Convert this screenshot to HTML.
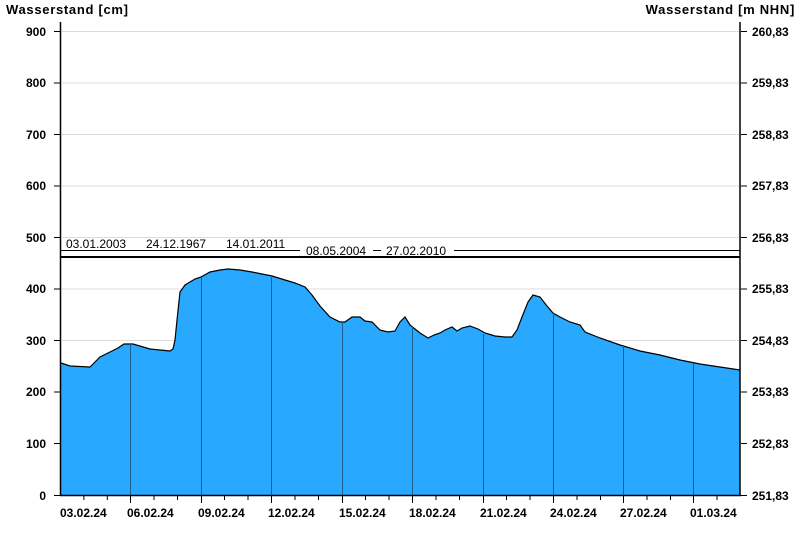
<!DOCTYPE html>
<html><head><meta charset="utf-8"><style>
html,body{margin:0;padding:0;background:#fff;}
svg{display:block;font-family:"Liberation Sans",Arial,sans-serif;}
.b{font-weight:bold;font-size:12px;fill:#000;}
.t{font-size:12px;fill:#000;}
.h{font-weight:bold;font-size:13px;fill:#000;letter-spacing:0.7px;}
</style></head><body>
<svg width="800" height="550" viewBox="0 0 800 550" xmlns="http://www.w3.org/2000/svg">
<rect width="800" height="550" fill="#fff"/>
<text x="6" y="14" class="h">Wasserstand [cm]</text>
<text x="795" y="14" class="h" text-anchor="end">Wasserstand [m NHN]</text>
<g stroke="#dcdcdc" stroke-width="1">
<line x1="61" y1="31.5" x2="740" y2="31.5"/>
<line x1="61" y1="83" x2="740" y2="83"/>
<line x1="61" y1="134.5" x2="740" y2="134.5"/>
<line x1="61" y1="186" x2="740" y2="186"/>
<line x1="61" y1="237.5" x2="740" y2="237.5"/>
<line x1="61" y1="289" x2="740" y2="289"/>
<line x1="61" y1="340.5" x2="740" y2="340.5"/>
<line x1="61" y1="392" x2="740" y2="392"/>
<line x1="61" y1="443.5" x2="740" y2="443.5"/>
</g>
<polygon fill="#29a8ff" stroke="none" points="61,495 61,363 70,366 90,367 95,362 100,357 110,352 118,348 124,344 133,344 150,349 160,350 170,351 173,349 175,340 177,320 180,292 185,285 195,279 201,277 210,272 220,270 228,269 240,270 252,272 262,274 272,276 285,280 295,283 305,287 312,295 320,306 330,317 340,322 345,322 352,317 360,317 365,321 372,322 380,330 388,332 395,331 400,322 405,317 410,325 415,329 420,333 428,338 434,335 440,333 445,330 452,327 457,331 462,328 470,326 478,329 485,333 495,336 505,337 512,337 517,330 522,317 528,302 533,295 540,297 547,306 553,313 560,317 570,322 580,325 585,332 600,338 620,345 640,351 660,355 680,360 700,364 720,367 740,370 740,495"/>
<polyline fill="none" stroke="#000" stroke-width="1.2" points="61,363 70,366 90,367 95,362 100,357 110,352 118,348 124,344 133,344 150,349 160,350 170,351 173,349 175,340 177,320 180,292 185,285 195,279 201,277 210,272 220,270 228,269 240,270 252,272 262,274 272,276 285,280 295,283 305,287 312,295 320,306 330,317 340,322 345,322 352,317 360,317 365,321 372,322 380,330 388,332 395,331 400,322 405,317 410,325 415,329 420,333 428,338 434,335 440,333 445,330 452,327 457,331 462,328 470,326 478,329 485,333 495,336 505,337 512,337 517,330 522,317 528,302 533,295 540,297 547,306 553,313 560,317 570,322 580,325 585,332 600,338 620,345 640,351 660,355 680,360 700,364 720,367 740,370"/>
<g stroke="#1b5f8f" stroke-width="1">
<line x1="130.5" y1="344" x2="130.5" y2="495"/>
<line x1="201.5" y1="277" x2="201.5" y2="495"/>
<line x1="271.5" y1="276" x2="271.5" y2="495"/>
<line x1="342.5" y1="322" x2="342.5" y2="495"/>
<line x1="412.5" y1="326" x2="412.5" y2="495"/>
<line x1="483.5" y1="334" x2="483.5" y2="495"/>
<line x1="553.5" y1="313" x2="553.5" y2="495"/>
<line x1="623.5" y1="345" x2="623.5" y2="495"/>
<line x1="693.5" y1="363" x2="693.5" y2="495"/>
</g>
<line x1="61" y1="250.5" x2="300" y2="250.5" stroke="#000" stroke-width="1"/>
<line x1="373" y1="250.5" x2="381" y2="250.5" stroke="#000" stroke-width="1"/>
<line x1="454" y1="250.5" x2="740" y2="250.5" stroke="#000" stroke-width="1"/>
<line x1="61" y1="257" x2="740" y2="257" stroke="#000" stroke-width="2"/>
<text x="66" y="248" class="t">03.01.2003</text>
<text x="146" y="248" class="t">24.12.1967</text>
<text x="226" y="248" class="t">14.01.2011</text>
<text x="306" y="255" class="t">08.05.2004</text>
<text x="386" y="255" class="t">27.02.2010</text>
<g stroke="#000" stroke-width="1.5">
<line x1="60.5" y1="22" x2="60.5" y2="496"/>
<line x1="740" y1="22" x2="740" y2="496"/>
<line x1="60" y1="495.5" x2="741" y2="495.5"/>
</g>
<g stroke="#000" stroke-width="1">
<line x1="54" y1="31.5" x2="60" y2="31.5"/><line x1="54" y1="83" x2="60" y2="83"/><line x1="54" y1="134.5" x2="60" y2="134.5"/><line x1="54" y1="186" x2="60" y2="186"/><line x1="54" y1="237.5" x2="60" y2="237.5"/><line x1="54" y1="289" x2="60" y2="289"/><line x1="54" y1="340.5" x2="60" y2="340.5"/><line x1="54" y1="392" x2="60" y2="392"/><line x1="54" y1="443.5" x2="60" y2="443.5"/><line x1="54" y1="495.5" x2="60" y2="495.5"/>
<line x1="741" y1="31.5" x2="747" y2="31.5"/><line x1="741" y1="83" x2="747" y2="83"/><line x1="741" y1="134.5" x2="747" y2="134.5"/><line x1="741" y1="186" x2="747" y2="186"/><line x1="741" y1="237.5" x2="747" y2="237.5"/><line x1="741" y1="289" x2="747" y2="289"/><line x1="741" y1="340.5" x2="747" y2="340.5"/><line x1="741" y1="392" x2="747" y2="392"/><line x1="741" y1="443.5" x2="747" y2="443.5"/><line x1="741" y1="495.5" x2="747" y2="495.5"/>
</g>
<g class="b" text-anchor="end">
<text x="46" y="36">900</text><text x="46" y="87">800</text><text x="46" y="139">700</text><text x="46" y="190">600</text><text x="46" y="242">500</text><text x="46" y="293">400</text><text x="46" y="345">300</text><text x="46" y="396">200</text><text x="46" y="448">100</text><text x="46" y="500">0</text>
</g>
<g class="b">
<text x="752" y="36">260,83</text><text x="752" y="87">259,83</text><text x="752" y="139">258,83</text><text x="752" y="190">257,83</text><text x="752" y="242">256,83</text><text x="752" y="293">255,83</text><text x="752" y="345">254,83</text><text x="752" y="396">253,83</text><text x="752" y="448">252,83</text><text x="752" y="500">251,83</text>
</g>
<g class="b">
<text x="60" y="517">03.02.24</text><text x="127" y="517">06.02.24</text><text x="198" y="517">09.02.24</text><text x="268" y="517">12.02.24</text><text x="339" y="517">15.02.24</text><text x="409" y="517">18.02.24</text><text x="480" y="517">21.02.24</text><text x="550" y="517">24.02.24</text><text x="620" y="517">27.02.24</text><text x="690" y="517">01.03.24</text>
</g>
<g stroke="#000" stroke-width="1">
<line x1="83.9" y1="496" x2="83.9" y2="500"/><line x1="107.3" y1="496" x2="107.3" y2="500"/><line x1="130.5" y1="496" x2="130.5" y2="503"/>
<line x1="154" y1="496" x2="154" y2="500"/><line x1="177.5" y1="496" x2="177.5" y2="500"/><line x1="201.5" y1="496" x2="201.5" y2="503"/>
<line x1="224.5" y1="496" x2="224.5" y2="500"/><line x1="248" y1="496" x2="248" y2="500"/><line x1="271.5" y1="496" x2="271.5" y2="503"/>
<line x1="295" y1="496" x2="295" y2="500"/><line x1="318.5" y1="496" x2="318.5" y2="500"/><line x1="342.5" y1="496" x2="342.5" y2="503"/>
<line x1="365.5" y1="496" x2="365.5" y2="500"/><line x1="389" y1="496" x2="389" y2="500"/><line x1="412.5" y1="496" x2="412.5" y2="503"/>
<line x1="436" y1="496" x2="436" y2="500"/><line x1="459.5" y1="496" x2="459.5" y2="500"/><line x1="483.5" y1="496" x2="483.5" y2="503"/>
<line x1="506.5" y1="496" x2="506.5" y2="500"/><line x1="530" y1="496" x2="530" y2="500"/><line x1="553.5" y1="496" x2="553.5" y2="503"/>
<line x1="577" y1="496" x2="577" y2="500"/><line x1="600.5" y1="496" x2="600.5" y2="500"/><line x1="623.5" y1="496" x2="623.5" y2="503"/>
<line x1="647" y1="496" x2="647" y2="500"/><line x1="670.5" y1="496" x2="670.5" y2="500"/><line x1="693.5" y1="496" x2="693.5" y2="503"/>
<line x1="717" y1="496" x2="717" y2="500"/>
</g>
</svg>
</body></html>
